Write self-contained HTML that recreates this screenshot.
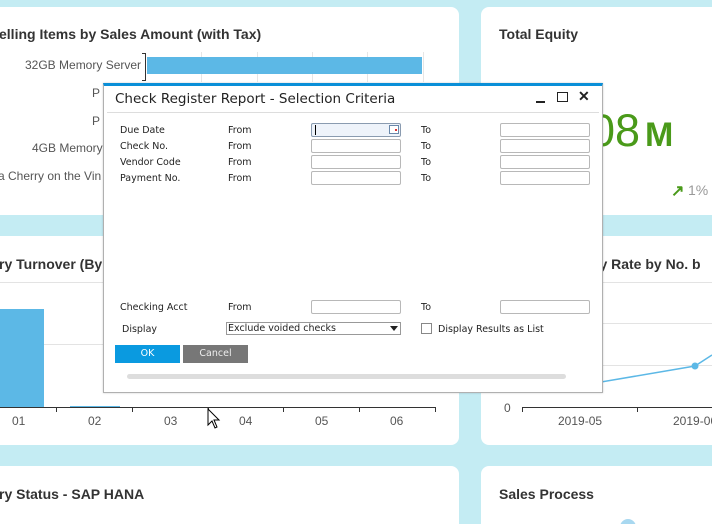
<!DOCTYPE html>
<html style="overflow:hidden"><head><style>
*{margin:0;padding:0;box-sizing:border-box}
html,body{width:712px;height:524px;overflow:hidden}
body{background:#c4ecf3;font-family:"Liberation Sans",sans-serif;position:relative}
.a{position:absolute;white-space:nowrap}
.card{position:absolute;background:#fff;border-radius:8px}
.t{font-weight:bold;font-size:14px;color:#333}
.l{font-size:12px;color:#555}
.d{font-family:"DejaVu Sans","Liberation Sans",sans-serif;font-size:9.5px;color:#222}
.in{position:absolute;border:1px solid #b8b8b8;border-radius:2px;background:#fff;height:14px;width:90px}
</style></head><body>
<!-- cards -->
<div class="card" style="left:-10px;top:7px;width:469px;height:208px"></div>
<div class="card" style="left:481px;top:7px;width:240px;height:208px"></div>
<div class="card" style="left:-10px;top:236px;width:469px;height:209px"></div>
<div class="card" style="left:481px;top:236px;width:240px;height:209px"></div>
<div class="card" style="left:-10px;top:466px;width:469px;height:58px;border-radius:8px 8px 0 0"></div>
<div class="card" style="left:481px;top:466px;width:240px;height:58px;border-radius:8px 8px 0 0"></div>

<!-- card1 -->
<div class="a t" style="left:-1px;top:26px">elling Items by Sales Amount (with Tax)</div>
<div class="a" style="left:201px;top:52px;width:1px;height:30px;background:#e6e6e6"></div>
<div class="a" style="left:257px;top:52px;width:1px;height:30px;background:#e6e6e6"></div>
<div class="a" style="left:312px;top:52px;width:1px;height:30px;background:#e6e6e6"></div>
<div class="a" style="left:367px;top:52px;width:1px;height:30px;background:#e6e6e6"></div>
<div class="a" style="left:423px;top:52px;width:1px;height:30px;background:#e6e6e6"></div>
<div class="a" style="left:142px;top:53px;width:4px;height:28px;border:1px solid #333;border-left:none"></div>
<div class="a" style="left:147px;top:57px;width:275px;height:17px;background:#5cb8e6"></div>
<div class="a l" style="left:25px;top:58px">32GB Memory Server</div>
<div class="a l" style="left:92px;top:86px">P</div>
<div class="a l" style="left:92px;top:114px">P</div>
<div class="a l" style="left:32px;top:141px">4GB Memory</div>
<div class="a l" style="left:-2px;top:169px">a Cherry on the Vin</div>

<!-- card row2 left -->
<div class="a t" style="left:-1px;top:256px">ry Turnover (By</div>
<div class="a" style="left:0;top:282px;width:459px;height:1px;background:#e3e3e3"></div>
<div class="a" style="left:0;top:344px;width:459px;height:1px;background:#e3e3e3"></div>
<div class="a" style="left:0;top:309px;width:44px;height:99px;background:#5cb8e6"></div>
<div class="a" style="left:70px;top:406px;width:50px;height:2px;background:#5cb8e6"></div>
<div class="a" style="left:0;top:407px;width:436px;height:1px;background:#333"></div>
<div class="a" style="left:56px;top:407px;width:1px;height:5px;background:#333"></div>
<div class="a" style="left:132px;top:407px;width:1px;height:5px;background:#333"></div>
<div class="a" style="left:208px;top:407px;width:1px;height:5px;background:#333"></div>
<div class="a" style="left:283px;top:407px;width:1px;height:5px;background:#333"></div>
<div class="a" style="left:359px;top:407px;width:1px;height:5px;background:#333"></div>
<div class="a" style="left:435px;top:407px;width:1px;height:5px;background:#333"></div>
<div class="a l" style="left:12px;top:414px">01</div>
<div class="a l" style="left:88px;top:414px">02</div>
<div class="a l" style="left:164px;top:414px">03</div>
<div class="a l" style="left:239px;top:414px">04</div>
<div class="a l" style="left:315px;top:414px">05</div>
<div class="a l" style="left:390px;top:414px">06</div>

<div class="a t" style="left:-1px;top:486px">ry Status - SAP HANA</div>
<div class="a t" style="left:499px;top:486px">Sales Process</div>
<div class="a" style="left:620px;top:519px;width:16px;height:16px;border-radius:50%;background:#a8d8f0"></div>

<!-- right cards -->
<div class="a t" style="left:499px;top:26px">Total Equity</div>
<div class="a" style="left:590px;top:106px;font-size:45px;line-height:50px;color:#4a9a1a">08</div>
<div class="a" style="left:645px;top:117px;font-size:34px;line-height:36px;font-weight:bold;color:#4a9a1a">M</div>
<div class="a" style="left:671px;top:181px;font-size:16px;color:#4a9a1a;font-weight:bold">&#x2197;</div>
<div class="a" style="left:688px;top:182px;font-size:14px;color:#999">1%</div>

<div class="a t" style="left:594px;top:256px">ry Rate by No. b</div>
<div class="a" style="left:481px;top:282px;width:231px;height:1px;background:#e3e3e3"></div>
<div class="a" style="left:481px;top:323px;width:231px;height:1px;background:#e3e3e3"></div>
<div class="a" style="left:481px;top:365px;width:231px;height:1px;background:#e3e3e3"></div>
<svg class="a" style="left:0;top:0" width="712" height="524"><polyline points="560,389 695,366 712,355" fill="none" stroke="#5cb8e6" stroke-width="1.5"/><circle cx="695" cy="366" r="3.5" fill="#5cb8e6"/></svg>
<div class="a" style="left:522px;top:407px;width:190px;height:1px;background:#333"></div>
<div class="a" style="left:522px;top:407px;width:1px;height:5px;background:#333"></div>
<div class="a" style="left:637px;top:407px;width:1px;height:5px;background:#333"></div>
<div class="a l" style="left:504px;top:401px">0</div>
<div class="a l" style="left:558px;top:414px">2019-05</div>
<div class="a l" style="left:673px;top:414px">2019-06</div>

<!-- dialog -->
<div class="a" style="left:103px;top:83px;width:500px;height:310px;background:#fff;border:1px solid #b0b0b0;border-top:3px solid #0a8fd8;box-shadow:0 0 2px rgba(0,0,0,.2)"></div>
<div class="a" style="left:115px;top:91px;font-family:'DejaVu Sans','Liberation Sans',sans-serif;font-size:13.5px;color:#222">Check Register Report - Selection Criteria</div>
<div class="a" style="left:536px;top:101px;width:9px;height:2px;background:#222"></div>
<div class="a" style="left:557px;top:92px;width:11px;height:10px;border:1.5px solid #222"></div>
<div class="a" style="left:578px;top:88px;font-size:14px;font-weight:bold;color:#222">&#x2715;</div>
<div class="a" style="left:107px;top:112px;width:492px;height:1px;background:#ddd"></div>

<div class="a d" style="left:120px;top:125px">Due Date</div>
<div class="a d" style="left:120px;top:141px">Check No.</div>
<div class="a d" style="left:120px;top:157px">Vendor Code</div>
<div class="a d" style="left:120px;top:173px">Payment No.</div>
<div class="a d" style="left:228px;top:125px">From</div>
<div class="a d" style="left:228px;top:141px">From</div>
<div class="a d" style="left:228px;top:157px">From</div>
<div class="a d" style="left:228px;top:173px">From</div>
<div class="a d" style="left:421px;top:125px">To</div>
<div class="a d" style="left:421px;top:141px">To</div>
<div class="a d" style="left:421px;top:157px">To</div>
<div class="a d" style="left:421px;top:173px">To</div>
<div class="in" style="left:311px;top:123px;background:#eef3fa;border-color:#8a9bb0"></div>
<div class="a" style="left:315px;top:125px;width:1px;height:10px;background:#000"></div>
<div class="a" style="left:389px;top:125px;width:10px;height:9px;border:1px solid #6a88aa;background:#fff"></div>
<div class="a" style="left:395px;top:129px;width:2px;height:2px;background:#d33"></div>
<div class="in" style="left:311px;top:139px"></div>
<div class="in" style="left:311px;top:155px"></div>
<div class="in" style="left:311px;top:171px"></div>
<div class="in" style="left:500px;top:123px"></div>
<div class="in" style="left:500px;top:139px"></div>
<div class="in" style="left:500px;top:155px"></div>
<div class="in" style="left:500px;top:171px"></div>

<div class="a d" style="left:120px;top:302px">Checking Acct</div>
<div class="a d" style="left:228px;top:302px">From</div>
<div class="a d" style="left:421px;top:302px">To</div>
<div class="in" style="left:311px;top:300px"></div>
<div class="in" style="left:500px;top:300px"></div>
<div class="a d" style="left:122px;top:324px">Display</div>
<div class="a" style="left:226px;top:322px;width:175px;height:13px;border:1px solid #999;background:#fff"></div>
<div class="a d" style="left:228px;top:323px">Exclude voided checks</div>
<div class="a" style="left:390px;top:326px;width:0;height:0;border-left:4px solid transparent;border-right:4px solid transparent;border-top:5px solid #222"></div>
<div class="a" style="left:421px;top:323px;width:11px;height:11px;border:1px solid #888;background:#fff"></div>
<div class="a d" style="left:438px;top:324px">Display Results as List</div>
<div class="a" style="left:115px;top:345px;width:65px;height:18px;background:#0a9ae0;color:#fff;font-size:9.5px;text-align:center;line-height:17px;font-family:'DejaVu Sans',sans-serif">OK</div>
<div class="a" style="left:183px;top:345px;width:65px;height:18px;background:#777;color:#eee;font-size:9.5px;text-align:center;line-height:17px;font-family:'DejaVu Sans',sans-serif">Cancel</div>
<div class="a" style="left:127px;top:374px;width:439px;height:5px;border-radius:3px;background:#ddd"></div>

<!-- cursor -->
<svg class="a" style="left:207px;top:408px" width="14" height="22"><path d="M1,1 L1,17 L5,13 L8,20 L10,19 L7,12 L12,12 Z" fill="#fff" stroke="#000" stroke-width="1"/></svg>
</body></html>
